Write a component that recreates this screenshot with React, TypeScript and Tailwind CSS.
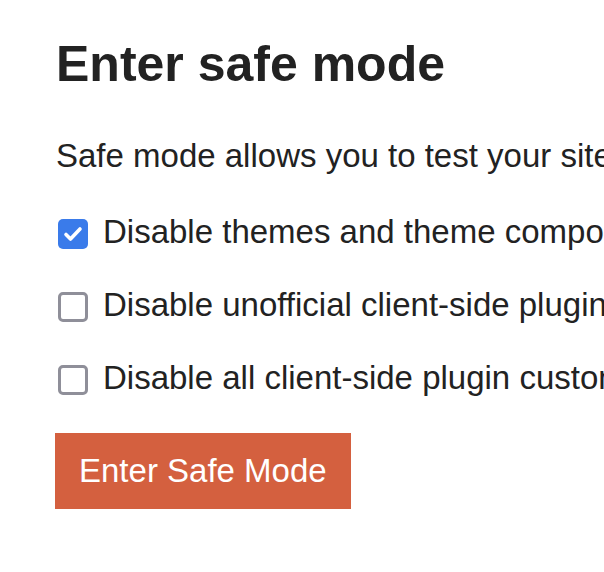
import React from 'react';

const options = [
  { label: 'Disable themes and theme components', checked: true },
  { label: 'Disable unofficial client-side plugin customizations', checked: false },
  { label: 'Disable all client-side plugin customizations', checked: false },
];

const Box = ({ checked }: { checked: boolean }) =>
  checked ? (
    <span className="flex h-[30px] w-[30px] shrink-0 items-center justify-center rounded-[5px] bg-[#3a7bea]">
      <svg width="24" height="24" viewBox="0 0 24 24" fill="none">
        <path d="M5 12.5l4.5 4.5L19 7" stroke="white" strokeWidth="3.6" strokeLinecap="round" strokeLinejoin="round" />
      </svg>
    </span>
  ) : (
    <span className="h-[30px] w-[30px] shrink-0 rounded-[5px] border-[3px] border-[#8f8f99] bg-white" />
  );

export default function App() {
  return (
    <div
      className="h-[572px] w-[604px] overflow-hidden bg-white pl-[56px] pt-[36px] text-[#222222]"
      style={{ fontFamily: '"Liberation Sans", Arial, sans-serif' }}
    >
      <h1 className="whitespace-nowrap text-[50px] font-bold leading-[56px]">Enter safe mode</h1>
      <p className="mt-[44px] whitespace-nowrap text-[33px] leading-[40px]">
        Safe mode allows you to test your site without loading client-side customizations.
      </p>
      <div className="mt-[36px] flex flex-col gap-[33px]">
        {options.map((o) => (
          <label key={o.label} className="flex items-center gap-[15px] whitespace-nowrap text-[33px] leading-[40px]">
            <span className="ml-[2px] mt-[3px] flex">
              <Box checked={o.checked} />
            </span>
            <span>{o.label}</span>
          </label>
        ))}
      </div>
      <button className="-ml-px mt-[35px] flex h-[76px] items-center bg-[#d4603f] px-[24px] text-[33px] leading-[40px] text-white">
        Enter Safe Mode
      </button>
    </div>
  );
}
